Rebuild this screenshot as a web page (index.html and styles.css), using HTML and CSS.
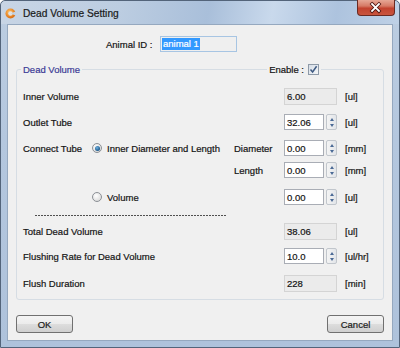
FILE: index.html
```html
<!DOCTYPE html>
<html>
<head>
<meta charset="utf-8">
<link rel="stylesheet" href="styles.css">
</head>
<body>
<div class="window">
  <div class="titlebar">
    <svg class="app-icon" width="11" height="11" viewBox="0 0 11 11">
      <defs>
        <radialGradient id="og" cx="0.4" cy="0.35" r="0.7">
          <stop offset="0" stop-color="#ffc060"/>
          <stop offset="1" stop-color="#d8660a"/>
        </radialGradient>
      </defs>
      <circle cx="5.5" cy="5.5" r="5" fill="url(#og)"/>
      <circle cx="5.5" cy="5.5" r="2.3" fill="#e2e2e2"/>
      <path d="M5.8 5.5 L11 3.2 L11 7.8 Z" fill="#c3d2e3"/>
    </svg>
    <span class="title">Dead Volume Setting</span>
    <div class="close">
      <svg width="38" height="16" viewBox="0 0 38 16">
        <path d="M15.5 4 L22.5 11 M22.5 4 L15.5 11" stroke="#4a1410" stroke-width="3.6" stroke-linecap="square" fill="none"/>
        <path d="M15.5 4 L22.5 11 M22.5 4 L15.5 11" stroke="#ffffff" stroke-width="2" stroke-linecap="square" fill="none"/>
      </svg>
    </div>
  </div>
  <div class="client">
    <div class="id-row">
      <span class="id-label">Animal ID :</span>
      <div class="id-input"><span class="sel">animal 1</span></div>
    </div>

    <div class="group">
      <div class="group-head">
        <span class="legend">Dead Volume</span>
        <span class="enable">Enable :
          <span class="check">
            <svg width="9" height="9" viewBox="0 0 9 9"><path d="M1.5 4.5 L3.6 7 L7.6 1.2" stroke="#3f5a82" stroke-width="1.5" fill="none"/></svg>
          </span>
        </span>
      </div>

      <div class="row r1">
        <span class="lbl">Inner Volume</span>
        <span></span><span></span>
        <div class="field ro">6.00</div>
        <span class="unit">[ul]</span>
      </div>

      <div class="row r2">
        <span class="lbl">Outlet Tube</span>
        <span></span><span></span>
        <div class="spin"><div class="field">32.06</div><div class="spinner"><i class="up"></i><i class="dn"></i></div></div>
        <span class="unit">[ul]</span>
      </div>

      <div class="row r3">
        <span class="lbl">Connect Tube</span>
        <span class="opt"><span class="radio on"><b></b></span>Inner Diameter and Length</span>
        <span class="sub">Diameter</span>
        <div class="spin"><div class="field">0.00</div><div class="spinner"><i class="up"></i><i class="dn"></i></div></div>
        <span class="unit">[mm]</span>
      </div>

      <div class="row r4">
        <span></span><span></span>
        <span class="sub">Length</span>
        <div class="spin"><div class="field">0.00</div><div class="spinner"><i class="up"></i><i class="dn"></i></div></div>
        <span class="unit">[mm]</span>
      </div>

      <div class="row r5">
        <span></span>
        <span class="opt"><span class="radio"></span>Volume</span>
        <span></span>
        <div class="spin"><div class="field">0.00</div><div class="spinner"><i class="up"></i><i class="dn"></i></div></div>
        <span class="unit">[ul]</span>
      </div>

      <div class="dash"></div>

      <div class="row r6">
        <span class="lbl">Total Dead Volume</span>
        <span></span><span></span>
        <div class="field ro">38.06</div>
        <span class="unit">[ul]</span>
      </div>

      <div class="row r7">
        <span class="lbl">Flushing Rate for Dead Volume</span>
        <span></span><span></span>
        <div class="spin"><div class="field">10.0</div><div class="spinner"><i class="up"></i><i class="dn"></i></div></div>
        <span class="unit">[ul/hr]</span>
      </div>

      <div class="row r8">
        <span class="lbl">Flush Duration</span>
        <span></span><span></span>
        <div class="field ro">228</div>
        <span class="unit">[min]</span>
      </div>
    </div>

    <div class="buttons">
      <button class="btn">OK</button>
      <button class="btn">Cancel</button>
    </div>
  </div>
</div>
</body>
</html>
```

FILE: styles.css
```css
* { box-sizing: border-box; }
html, body { margin: 0; padding: 0; }
body {
  width: 400px;
  height: 348px;
  overflow: hidden;
  font-family: "Liberation Sans", Arial, sans-serif;
  font-size: 9.5px;
  color: #141414;
  -webkit-text-stroke: 0.2px;
}
.window {
  width: 400px;
  height: 348px;
  border: 1px solid #53647a;
  border-radius: 5px 5px 0 0;
  background: linear-gradient(180deg, #bccde1 0%, #b4c7de 40%, #aec2db 100%);
  display: flex;
  flex-direction: column;
}
.titlebar {
  height: 23px;
  display: flex;
  align-items: center;
  padding: 0 4px 0 4px;
  background: linear-gradient(100deg, #c8d5e5 0%, #bccde1 30%, #a9bfda 52%, #c9d9ec 68%, #adc3de 84%, #bfd1e6 100%);
  border-radius: 5px 5px 0 0;
}
.app-icon { flex: none; margin-top: 1px; }
.title {
  margin-left: 7px;
  font-size: 10.2px;
  color: #1a1a1a;
  padding-top: 1px;
}
.close {
  margin-left: auto;
  align-self: flex-start;
  width: 38px;
  height: 16px;
  margin-top: -1px;
  border: 1px solid #6a2a22;
  border-top: none;
  border-radius: 0 0 4px 4px;
  background: linear-gradient(180deg, #e6a796 0%, #d67a66 40%, #c2432f 55%, #c9553e 100%);
  display: flex;
}
.close svg { margin-left: -1px; }

.client {
  margin: 0 6px;
  height: 317px;
  background: #f0f0f0;
  border: 1px solid #95a8bf;
  display: flex;
  flex-direction: column;
}

.id-row {
  display: flex;
  align-items: center;
  height: 16px;
  margin-top: 11px;
  padding-left: 98px;
}
.id-label { width: 54px; }
.id-input {
  width: 77px;
  height: 16px;
  border: 1px solid #a7c5e3;
  background: #efefef;
  display: flex;
  align-items: center;
  padding-left: 1px;
}
.sel {
  background: #3399ff;
  color: #fff;
  line-height: 12px;
  padding: 0 1px;
}

.group {
  margin: 17px 8px 0;
  border: 1px solid #d6dde4;
  border-radius: 3px;
  padding: 0 6px 8px;
  display: flex;
  flex-direction: column;
}
.group-head {
  height: 14px;
  margin-top: -8px;
  display: flex;
  align-items: center;
  justify-content: space-between;
}
.legend {
  background: #f0f0f0;
  color: #3b3b96;
  padding: 0 2px;
  margin-left: -2px;
}
.enable {
  background: #f0f0f0;
  padding: 0 2px;
  margin-right: 56px;
  display: flex;
  align-items: center;
  gap: 4px;
}
.check {
  width: 11px;
  height: 11px;
  border: 1px solid #8e9aa8;
  background: linear-gradient(135deg, #d6dde6, #f4f6f8);
  display: flex;
  align-items: center;
  justify-content: center;
}

.row {
  display: grid;
  grid-template-columns: 69px 142px 50px 53px auto;
  align-items: center;
  height: 16px;
}
.r1 { margin-top: 11px; }
.r2 { margin-top: 11px; }
.r3 { margin-top: 10px; }
.r4 { margin-top: 6px; }
.r5 { margin-top: 11px; }
.r6 { margin-top: 7px; }
.r7 { margin-top: 9px; }
.r8 { margin-top: 11px; }
.lbl { white-space: nowrap; }
.sub { white-space: nowrap; }
.unit { padding-left: 8px; white-space: nowrap; }
.opt {
  display: flex;
  align-items: center;
  gap: 5px;
  white-space: nowrap;
}

.dash {
  margin: 10px 0 0 12px;
  width: 192px;
  height: 1px;
  background: repeating-linear-gradient(90deg, #505050 0 2px, transparent 2px 3px);
}

.field {
  height: 16px;
  border: 1px solid #a9adb5;
  background: #fff;
  padding-left: 2px;
  display: flex;
  align-items: center;
  width: 40px;
}
.field.ro {
  width: 53px;
  height: 17px;
  background: #ebebeb;
  border-color: #d4d4d4;
}
.r1 .field.ro { margin-top: 1px; }
.spin {
  display: flex;
  gap: 2px;
  width: 53px;
}
.spinner {
  width: 11px;
  height: 16px;
  border: 1px solid #c1c6cc;
  border-radius: 2px;
  background: linear-gradient(90deg, #f4f4f4, #e2e5e9);
  display: flex;
  flex-direction: column;
  align-items: center;
  justify-content: center;
  gap: 3px;
}
.spinner i {
  display: block;
  width: 0;
  height: 0;
  border-left: 2.5px solid transparent;
  border-right: 2.5px solid transparent;
}
.spinner .up { border-bottom: 3px solid #4b6a95; }
.spinner .dn { border-top: 3px solid #4b6a95; }

.radio {
  width: 10px;
  height: 10px;
  border-radius: 50%;
  border: 1px solid #8c9096;
  background: radial-gradient(circle at 40% 35%, #ffffff 0%, #e4e4e4 60%, #cfcfcf 100%);
  display: flex;
  align-items: center;
  justify-content: center;
  flex: none;
}
.radio b {
  width: 5px;
  height: 5px;
  border-radius: 50%;
  background: radial-gradient(circle at 40% 35%, #6fb0e0 0%, #1c5a8c 70%, #0f3d66 100%);
}

.buttons {
  margin: 15px 8px 0;
  display: flex;
  justify-content: space-between;
}
.btn {
  width: 57px;
  height: 18px;
  padding: 0;
  border: 1px solid #707070;
  border-radius: 3px;
  background: linear-gradient(180deg, #f4f4f4 0%, #ebebeb 50%, #dddddd 51%, #cfcfcf 100%);
  font-family: "Liberation Sans", Arial, sans-serif;
  font-size: 9.5px;
  color: #1c1c1c;
}
```
